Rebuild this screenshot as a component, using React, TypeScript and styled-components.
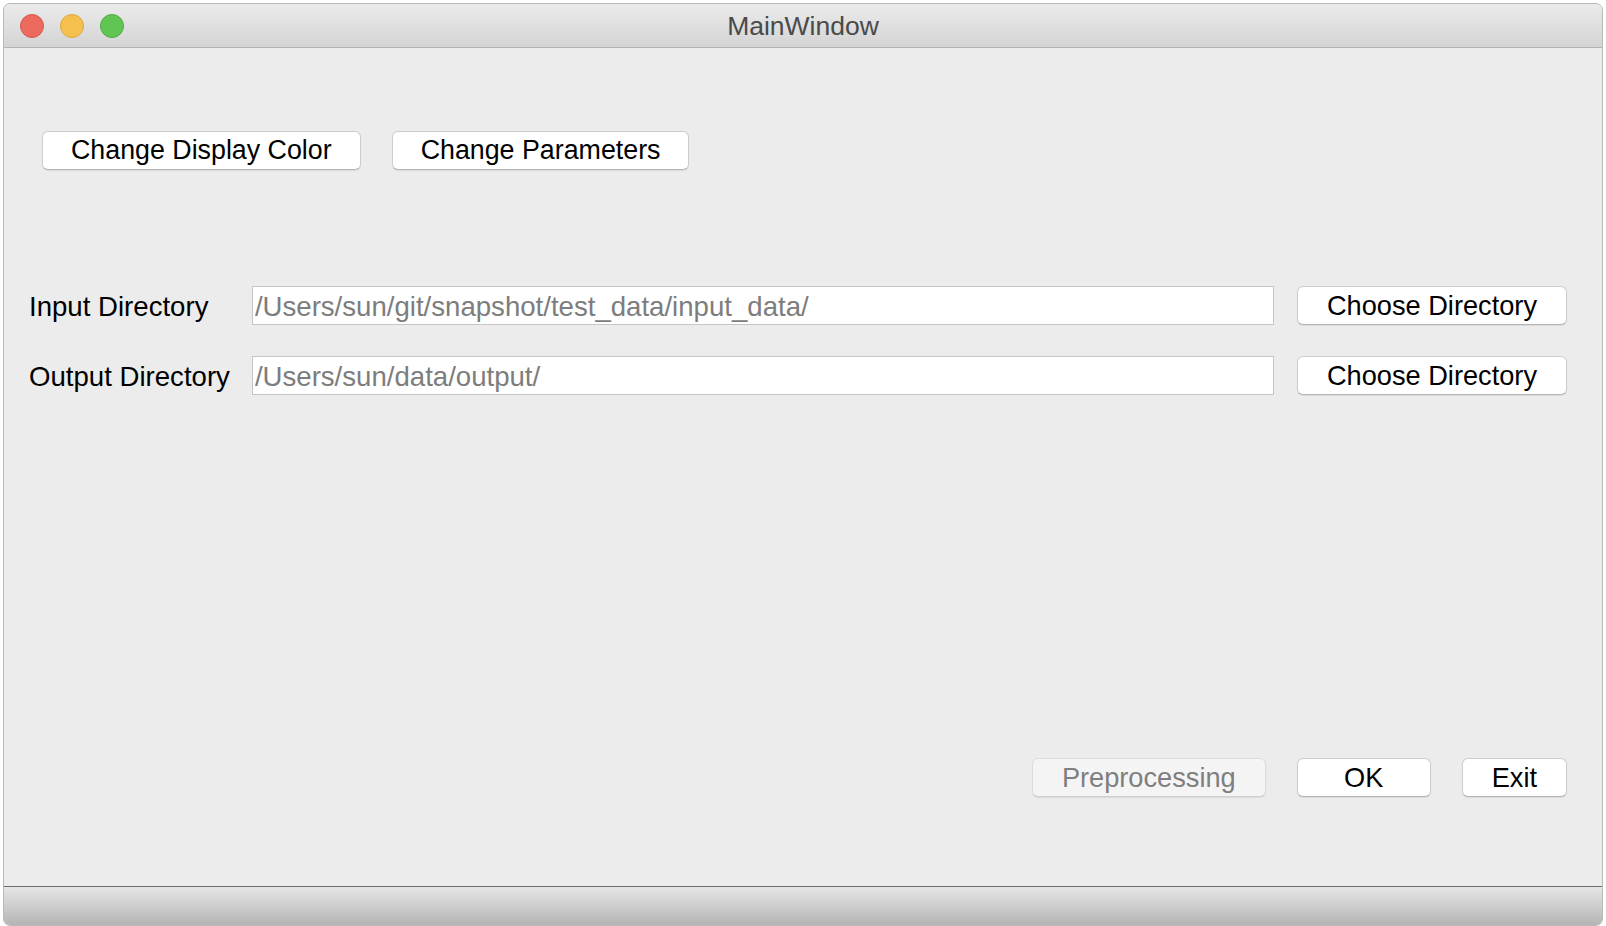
import styled, { createGlobalStyle } from "styled-components";

const GlobalStyle = createGlobalStyle`
  html, body {
    margin: 0;
    padding: 0;
    background: #ffffff;
  }
  body {
    font-family: "Liberation Sans", Arial, sans-serif;
  }
  * {
    box-sizing: border-box;
  }
`;

const Window = styled.div`
  margin: 3px 3px 0 3px;
  height: 923px;
  border: 1px solid #b9b9b9;
  border-radius: 7px;
  overflow: hidden;
  display: flex;
  flex-direction: column;
  background: #ececec;
`;

const TitleBar = styled.div`
  position: relative;
  height: 44px;
  flex-shrink: 0;
  display: flex;
  align-items: center;
  justify-content: center;
  background: linear-gradient(#ebebeb, #d4d4d4);
  border-bottom: 1px solid #b3b3b3;
`;

const Lights = styled.div`
  position: absolute;
  left: 16px;
  top: 10px;
  display: flex;
  gap: 16px;
`;

const Light = styled.span<{ $fill: string; $edge: string }>`
  width: 24px;
  height: 24px;
  border-radius: 50%;
  background: ${(p) => p.$fill};
  border: 1px solid ${(p) => p.$edge};
`;

const Title = styled.div`
  font-size: 26.5px;
  color: #4a4a4a;
  margin-top: 1px;
`;

const Content = styled.div`
  flex: 1;
  display: flex;
  flex-direction: column;
  padding: 0 35px 89px 24px;
`;

const TopButtons = styled.div`
  display: flex;
  gap: 31px;
  margin-top: 83px;
  padding-left: 14px;
`;

const Button = styled.button<{ $disabled?: boolean; $minWidth?: number }>`
  height: 39px;
  padding: 0 29px;
  min-width: ${(p) => (p.$minWidth ? `${p.$minWidth}px` : "0")};
  font-family: "Liberation Sans", Arial, sans-serif;
  font-size: 27.2px;
  color: ${(p) => (p.$disabled ? "#7f7f7f" : "#000000")};
  background: ${(p) => (p.$disabled ? "#f4f4f4" : "#ffffff")};
  border: 1px solid ${(p) => (p.$disabled ? "#dcdcdc" : "#cdcdcd")};
  border-bottom-color: ${(p) => (p.$disabled ? "#d0d0d0" : "#b5b5b5")};
  border-radius: 6px;
  box-shadow: 0 1px 1px rgba(0, 0, 0, 0.08);
  white-space: nowrap;
  line-height: 1;
  cursor: default;
`;

const ToolButton = styled(Button)`
  padding: 0 28px;
  font-size: 26.8px;
`;

const DirGrid = styled.div`
  display: grid;
  grid-template-columns: auto 1fr auto;
  column-gap: 22px;
  row-gap: 31px;
  align-items: center;
  margin-top: 116px;
`;

const Label = styled.label`
  font-size: 27.6px;
  color: #000000;
  padding: 3px 0 0 1px;
`;

const PathField = styled.input`
  height: 39px;
  margin-right: 1px;
  padding: 3px 2px 0;
  font-family: "Liberation Sans", Arial, sans-serif;
  font-size: 27.6px;
  color: #7d7d7d;
  background: #ffffff;
  border: 1px solid #c6c6c6;
  outline: none;
`;

const Spacer = styled.div`
  flex: 1;
`;

const BottomButtons = styled.div`
  display: flex;
  justify-content: flex-end;
  gap: 31px;
`;

const StatusBar = styled.div`
  height: 39px;
  flex-shrink: 0;
  border-top: 1px solid #6c6c6c;
  background: linear-gradient(#e6e6e6, #b4b4b4);
`;

const rows = [
  { label: "Input Directory", path: "/Users/sun/git/snapshot/test_data/input_data/" },
  { label: "Output Directory", path: "/Users/sun/data/output/" },
];

function App() {
  return (
    <>
      <GlobalStyle />
      <Window>
        <TitleBar>
          <Lights>
            <Light $fill="#ed6a5e" $edge="#d6564a" />
            <Light $fill="#f6c04f" $edge="#dea63a" />
            <Light $fill="#61c554" $edge="#4caa40" />
          </Lights>
          <Title>MainWindow</Title>
        </TitleBar>
        <Content>
          <TopButtons>
            <ToolButton>Change Display Color</ToolButton>
            <ToolButton>Change Parameters</ToolButton>
          </TopButtons>
          <DirGrid>
            {rows.map((row) => (
              <>
                <Label key={row.label + "-l"}>{row.label}</Label>
                <PathField key={row.label + "-f"} defaultValue={row.path} />
                <Button key={row.label + "-b"}>Choose Directory</Button>
              </>
            ))}
          </DirGrid>
          <Spacer />
          <BottomButtons>
            <Button $disabled>Preprocessing</Button>
            <Button $minWidth={134}>OK</Button>
            <Button>Exit</Button>
          </BottomButtons>
        </Content>
        <StatusBar />
      </Window>
    </>
  );
}

export default App;
